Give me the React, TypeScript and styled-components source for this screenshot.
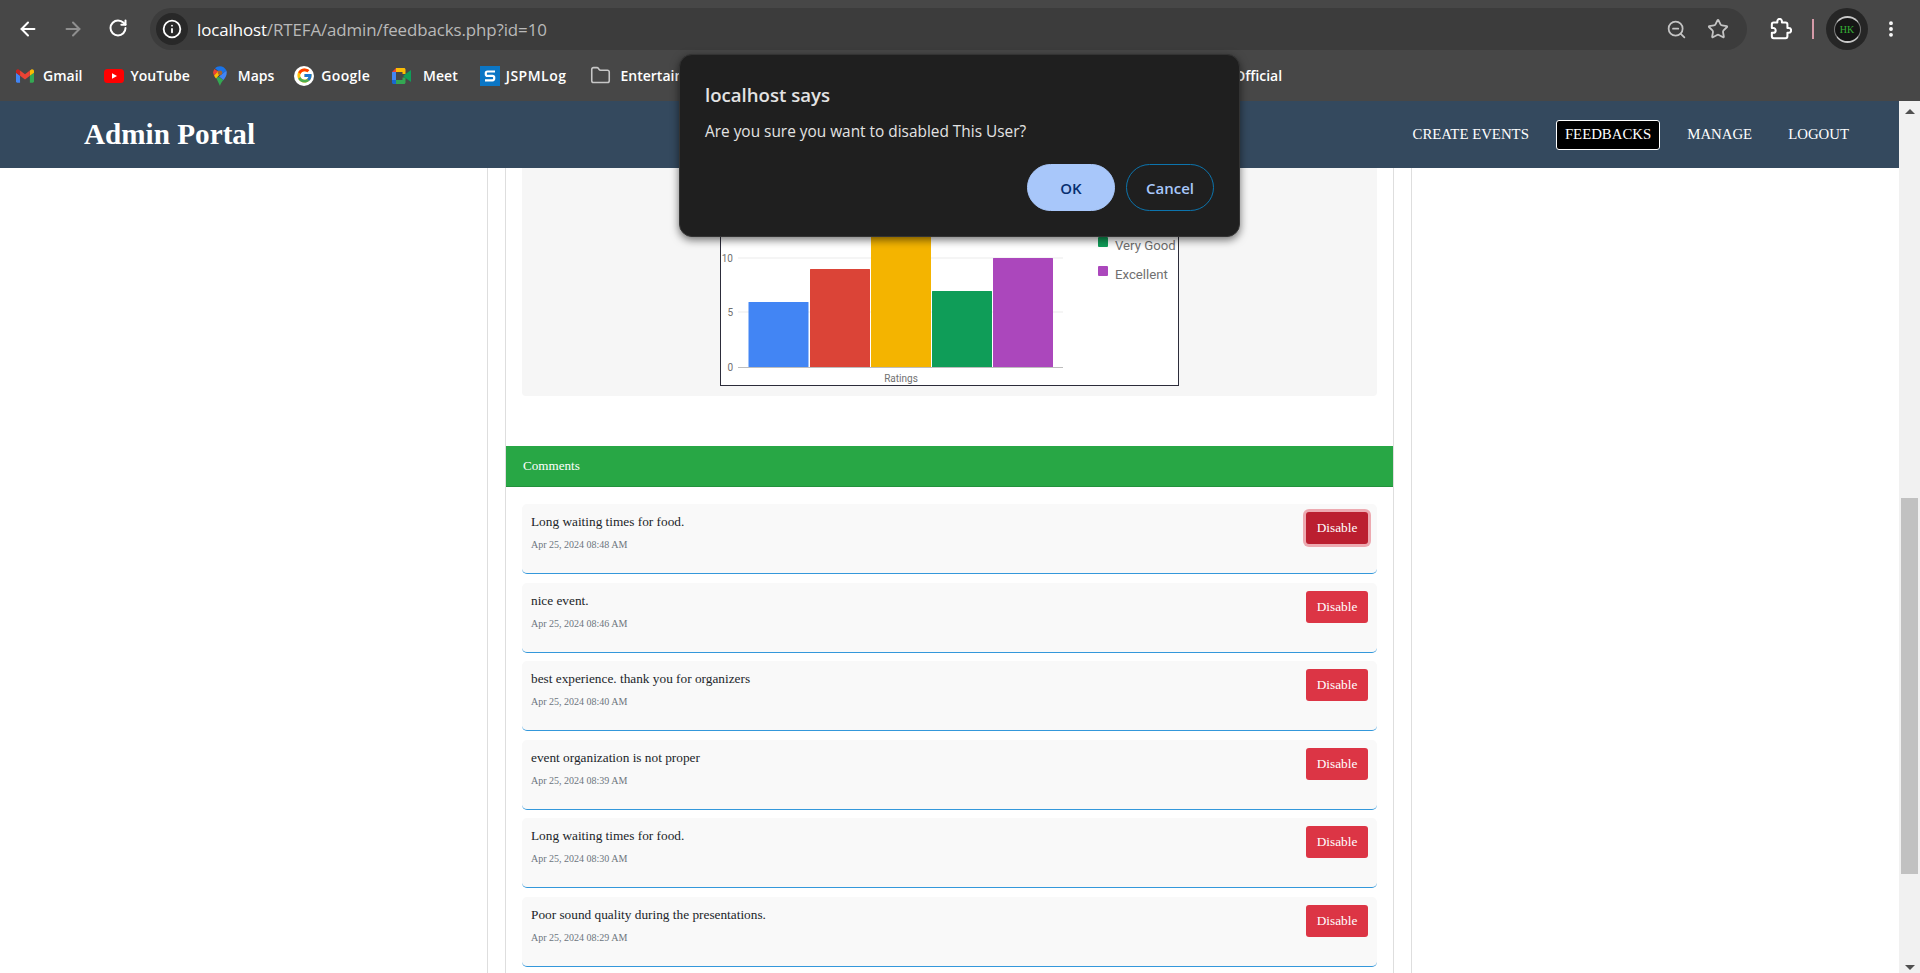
import { FC, ReactNode } from "react";
import styled, { createGlobalStyle } from "styled-components";
import { ArrowLeft, ArrowRight, EllipsisVertical, Folder, Info, RotateCw, Star, ZoomOut } from "lucide-react";
import { FcGoogle } from "react-icons/fc";

const GlobalStyle = createGlobalStyle`
  html, body {
    margin: 0;
    padding: 0;
    height: 100%;
    overflow: hidden;
    background: #fff;
  }
  * {
    box-sizing: border-box;
  }
`;

const Screen = styled.div`
  position: relative;
  width: 1920px;
  height: 973px;
  overflow: hidden;
  display: flex;
  flex-direction: column;
  font-family: "Liberation Serif", "Times New Roman", serif;
`;

/* browser chrome */
const Chrome = styled.header`
  height: 101px;
  flex: none;
  background: #474747;
  font-family: "Open Sans", "Noto Sans", sans-serif;
  color: #fff;
`;
const ToolRow = styled.div`
  height: 58px;
  padding: 8px 0 8px 0;
  display: flex;
  align-items: center;
`;
const NavIcon = styled.span<{ $dim?: boolean }>`
  width: 45px;
  flex: none;
  display: flex;
  justify-content: center;
  color: ${(props) => (props.$dim ? "#8f8f8f" : "#fff")};
`;
const NavIcons = styled.div`
  display: flex;
  padding-left: 5px;
  width: 150px;
  flex: none;
`;
const AddressBar = styled.div`
  width: 1597px;
  height: 42px;
  flex: none;
  border-radius: 21px;
  background: #3c3c3c;
  display: flex;
  align-items: center;
  padding: 0 6px;
`;
const SiteInfo = styled.span`
  width: 32px;
  height: 32px;
  border-radius: 50%;
  background: #282828;
  display: flex;
  align-items: center;
  justify-content: center;
  flex: none;
`;
const Url = styled.div`
  margin-left: 9px;
  font-size: 16.9px;
  letter-spacing: -0.1px;
  color: #b9b9b9;
  flex: 1;
  white-space: nowrap;
  strong {
    font-weight: 400;
    color: #fff;
  }
`;
const BarAction = styled.span<{ $gap: number }>`
  display: flex;
  margin-right: ${(props) => props.$gap}px;
  color: #c4c4c4;
`;
const ExtensionBtn = styled.span`
  margin-left: 23px;
  display: flex;
  color: #fff;
`;
const Divider = styled.span`
  width: 2px;
  height: 20px;
  margin-left: 20px;
  background: #d59aa8;
`;
const Avatar = styled.span`
  width: 42px;
  height: 42px;
  margin-left: 12px;
  border-radius: 50%;
  background: #262626;
  display: flex;
  align-items: center;
  justify-content: center;
  flex: none;
`;
const AvatarInner = styled.span`
  width: 27px;
  height: 27px;
  border-radius: 50%;
  background: #151515;
  border-style: solid;
  border-width: 2px 1px;
  border-color: #c9c9c9 #7a7a7a;
  color: #35b035;
  font: 10px "Liberation Serif", serif;
  display: flex;
  align-items: center;
  justify-content: center;
`;
const MenuBtn = styled.span`
  margin-left: 13px;
  display: flex;
  color: #fff;
`;

const BookmarkRow = styled.nav`
  height: 35px;
  padding-left: 16px;
  display: flex;
  align-items: center;
  font-size: 14px;
  font-weight: 600;
  white-space: nowrap;
`;
const Mark = styled.span<{ $gap: number; $left: number; $spread?: number }>`
  display: flex;
  align-items: center;
  gap: ${(props) => props.$gap}px;
  margin-left: ${(props) => props.$left}px;
  letter-spacing: ${(props) => props.$spread || 0}px;
  flex: none;
  svg {
    flex: none;
    display: block;
  }
`;
const GoogleDisc = styled.span`
  width: 20px;
  height: 20px;
  border-radius: 50%;
  background: #fff;
  display: flex;
  align-items: center;
  justify-content: center;
`;

/* page */
const Body = styled.div`
  flex: 1;
  min-height: 0;
  display: flex;
`;
const Viewport = styled.div`
  flex: 1;
  min-width: 0;
  display: flex;
  flex-direction: column;
  overflow: hidden;
`;
const TopNav = styled.div`
  height: 67px;
  flex: none;
  background: #34495e;
  color: #fff;
  display: flex;
  align-items: center;
  justify-content: space-between;
  padding: 0 41px 0 84px;
`;
const Brand = styled.h1`
  margin: 0;
  font-size: 29.2px;
  font-weight: 700;
  letter-spacing: 0;
`;
const NavLinks = styled.div`
  display: flex;
  align-items: center;
  gap: 18px;
`;
const NavLink = styled.a<{ $active?: boolean }>`
  font-size: 14.8px;
  height: 30px;
  display: flex;
  align-items: center;
  padding: 0 8px;
  border-radius: 3px;
  border: 1px solid ${(props) => (props.$active ? "#fff" : "transparent")};
  background: ${(props) => (props.$active ? "#000" : "transparent")};
  color: #fff;
`;
const Container = styled.main`
  width: 925px;
  margin: 0 auto;
  padding: 0 17px;
  border-left: 1px solid #dedede;
  border-right: 1px solid #dedede;
  flex: 1;
`;
const Card = styled.section`
  border-left: 1px solid #dedede;
  border-right: 1px solid #dedede;
  min-height: 100%;
`;
const ChartPanel = styled.div`
  margin: 0 16px 50px;
  height: 228px;
  padding-bottom: 10px;
  background: #f6f6f6;
  border-radius: 0 0 4px 4px;
  display: flex;
  justify-content: center;
`;
const ChartBox = styled.div`
  width: 459px;
  height: 218px;
  background: #fff;
  border: 1px solid #2c2c3a;
  svg {
    display: block;
  }
`;
const CommentsHead = styled.h2`
  margin: 0;
  height: 41px;
  padding: 0 17px;
  display: flex;
  align-items: center;
  background: #28a745;
  border-bottom: 1px solid #23913c;
  color: #fff;
  font-size: 13.1px;
  font-weight: 400;
`;
const CommentList = styled.div`
  padding: 17px 16px 0;
  display: flex;
  flex-direction: column;
  gap: 8.5px;
`;
const CommentRow = styled.article`
  height: 70px;
  flex: none;
  padding: 8px 9px 0;
  background: #f9f9f9;
  border-bottom: 1px solid #3498db;
  border-radius: 5px;
  display: flex;
  justify-content: space-between;
  align-items: flex-start;
`;
const CommentText = styled.p`
  margin: 0;
  padding-top: 1px;
  font-size: 13.3px;
  line-height: 18px;
  color: #212529;
`;
const CommentDate = styled.small`
  display: block;
  margin-top: 6px;
  font-size: 10px;
  line-height: 15px;
  color: #6c757d;
`;
const DisableBtn = styled.button<{ $focus?: boolean }>`
  width: 62px;
  height: 32px;
  padding: 0;
  border: 0;
  border-radius: 3px;
  background: ${(props) => (props.$focus ? "#bb1f30" : "#dc3545")};
  box-shadow: ${(props) => (props.$focus ? "0 0 0 3px rgba(220, 53, 69, 0.4)" : "none")};
  color: #fff;
  font-family: inherit;
  font-size: 13.3px;
`;

/* scrollbar */
const Scrollbar = styled.aside`
  width: 21px;
  flex: none;
  background: #f1f1f1;
  display: flex;
  flex-direction: column;
  align-items: center;
`;
const ArrowUp = styled.span`
  margin-top: 8px;
  border-left: 5px solid transparent;
  border-right: 5px solid transparent;
  border-bottom: 5px solid #505050;
`;
const ArrowDown = styled.span`
  margin-top: auto;
  margin-bottom: 3px;
  border-left: 5px solid transparent;
  border-right: 5px solid transparent;
  border-top: 5px solid #505050;
`;
const Thumb = styled.span`
  width: 17px;
  height: 376px;
  margin-top: 384px;
  background: #c1c1c1;
`;

/* alert dialog */
const Dialog = styled.div`
  position: absolute;
  left: 679px;
  top: 54px;
  width: 561px;
  height: 183px;
  padding: 26px 25px 0;
  background: #1f1f1f;
  border-radius: 13px;
  border: 1px solid #333;
  box-shadow: 0 3px 8px rgba(0, 0, 0, 0.55);
  font-family: "Open Sans", "Noto Sans", sans-serif;
  color: #e3e3e3;
`;
const DialogTitle = styled.h3`
  margin: 0;
  font-size: 18.6px;
  line-height: 28px;
  font-weight: 600;
`;
const DialogText = styled.p`
  margin: 13px 0 0;
  font-size: 15.4px;
  line-height: 20px;
`;
const DialogActions = styled.div`
  margin-top: 22px;
  display: flex;
  justify-content: flex-end;
  gap: 11px;
`;
const DialogBtn = styled.button<{ $primary?: boolean }>`
  width: 88px;
  height: 47px;
  border-radius: 24px;
  font-family: inherit;
  font-size: 15px;
  font-weight: 600;
  padding: 0;
  border: 1px solid ${(props) => (props.$primary ? "#a8c7fa" : "#0c74ad")};
  background: ${(props) => (props.$primary ? "#a8c7fa" : "transparent")};
  color: ${(props) => (props.$primary ? "#062e6f" : "#a8c7fa")};
`;

const ExtensionIcon = () => (
  <svg width="22" height="22" viewBox="0 0 24 24" fill="none" stroke="currentColor" strokeWidth="2.2" strokeLinejoin="round">
    <path d="M20.5 11H19V7c0-1.100-.9-2-2-2h-4V3.500C13 2.120 11.880 1 10.500 1S8 2.120 8 3.500V5H4c-1.100 0-2 .9-2 2v3.800h1.500c1.490 0 2.700 1.210 2.700 2.700s-1.210 2.700-2.700 2.700H2V20c0 1.100.9 2 2 2h13c1.100 0 2-.9 2-2v-4h1.500c1.380 0 2.500-1.120 2.500-2.500S21.880 11 20.500 11z" />
  </svg>
);
const GmailIcon = () => (
  <svg width="18" height="14" viewBox="0 0 24 18">
    <path fill="#4285f4" d="M1.600 18h3.800V8.700L0 4.600v11.800C0 17.300.7 18 1.600 18z" />
    <path fill="#34a853" d="M18.500 18h3.800c.9 0 1.700-.7 1.700-1.600V4.600l-5.500 4.100z" />
    <path fill="#fbbc04" d="M18.500 1.600v7.100L24 4.600V2.500c0-2-2.300-3.200-3.900-2z" />
    <path fill="#ea4335" d="M5.400 8.700V1.600L12 6.500l6.500-4.900v7.100L12 13.600z" />
    <path fill="#c5221f" d="M0 2.500v2.100l5.400 4.100V1.600L3.900.5C2.300-.7 0 .5 0 2.500z" />
  </svg>
);
const YoutubeIcon = () => (
  <svg width="20" height="14" viewBox="0 0 20 14">
    <rect width="20" height="14" rx="3.500" fill="#f00" />
    <path fill="#fff" d="M8 4.200 13 7 8 9.800z" />
  </svg>
);
const MapsIcon = () => (
  <svg width="14" height="20" viewBox="0 0 14 20">
    <path fill="#34a853" d="M3 11.500 7 20c.5-2.500 2-4.200 3.500-6L6 11z" />
    <path fill="#fbbc04" d="M1 9.500c.4 1 1.200 2 2 3L8 7 5 4.500z" />
    <path fill="#4285f4" d="m9 8 4.400-3.400C14.500 8 12.800 11 10.500 14L6 10.500z" />
    <path fill="#ea4335" d="M1.500 3 5 5.500 1 9.500C-.2 7-.2 5 1.500 3z" />
    <path fill="#1a73e8" d="M2 2.400C4.500-.7 11-1 13.400 4.600L9 8 5 4.500z" />
    <circle cx="7" cy="6.800" r="2.300" fill="#a9662e" />
  </svg>
);
const MeetIcon = () => (
  <svg width="19" height="16" viewBox="0 0 19 16">
    <path fill="#ea4335" d="M4 0 0 4h4z" />
    <path fill="#4285f4" d="M0 4h4v8H0z" />
    <path fill="#1967d2" d="M0 12h4v4H1.500C.7 16 0 15.300 0 14.500z" />
    <path fill="#fbbc04" d="M4 0h8c.8 0 1.500.7 1.500 1.500V6l-3 0V4H4z" />
    <path fill="#34a853" d="M4 12h6.500V9.500l3 0v5c0 .8-.7 1.500-1.500 1.500H4z" />
    <path fill="#0f9d58" d="m11 8 2.500-2 5.500-4v12l-5.500-4z" />
  </svg>
);
const JspIcon = () => (
  <svg width="20" height="20" viewBox="0 0 20 20">
    <rect width="20" height="20" fill="#0b76c5" />
    <path fill="none" stroke="#fff" strokeWidth="2.200" d="M15 5.500H7.500c-1 0-1.700.6-1.700 1.700v1c0 1 .7 1.700 1.700 1.700h5c1 0 1.700.7 1.700 1.700v1c0 1.100-.7 1.700-1.700 1.700H5" />
  </svg>
);

const Bookmark: FC<{ icon: ReactNode; label: string; gap: number; left: number; spread?: number }> = ({ icon, label, gap, left, spread }) => (
  <Mark $gap={gap} $left={left} $spread={spread}>
    {icon}
    {label}
  </Mark>
);

const Chart = () => {
  const bars = [
    { x: 748.5, top: 302, color: "#4285f4" },
    { x: 810, top: 269, color: "#db4437" },
    { x: 871, top: 214, color: "#f4b400" },
    { x: 932, top: 291, color: "#0f9d58" },
    { x: 993, top: 258, color: "#ab47bc" },
  ];
  const labelStyle = { fontFamily: "Roboto, Arial, sans-serif", fontSize: 10, fill: "#707070" };
  return (
    <svg width="457" height="216" viewBox="721 169 457 216">
      <line x1="738" x2="1063" y1="258" y2="258" stroke="#ebebeb" />
      <line x1="738" x2="1063" y1="312" y2="312" stroke="#ebebeb" />
      {bars.map((bar) => (
        <rect key={bar.x} x={bar.x} y={bar.top} width="60" height={367 - bar.top} fill={bar.color} rx="0.5" />
      ))}
      <line x1="738" x2="1063" y1="367.500" y2="367.500" stroke="#bdbdbd" />
      <text x="733" y="262" textAnchor="end" style={labelStyle}>10</text>
      <text x="733" y="316" textAnchor="end" style={labelStyle}>5</text>
      <text x="733" y="371" textAnchor="end" style={labelStyle}>0</text>
      <text x="901" y="382" textAnchor="middle" style={labelStyle}>Ratings</text>
      <rect x="1098" y="237" width="10" height="10" rx="1" fill="#0f9d58" />
      <text x="1115" y="250" style={{ ...labelStyle, fontSize: 13.2 }}>Very Good</text>
      <rect x="1098" y="266" width="10" height="10" rx="1" fill="#ab47bc" />
      <text x="1115" y="279" style={{ ...labelStyle, fontSize: 13.2 }}>Excellent</text>
    </svg>
  );
};

const comments = [
  { text: "Long waiting times for food.", date: "Apr 25, 2024 08:48 AM" },
  { text: "nice event.", date: "Apr 25, 2024 08:46 AM" },
  { text: "best experience. thank you for organizers", date: "Apr 25, 2024 08:40 AM" },
  { text: "event organization is not proper", date: "Apr 25, 2024 08:39 AM" },
  { text: "Long waiting times for food.", date: "Apr 25, 2024 08:30 AM" },
  { text: "Poor sound quality during the presentations.", date: "Apr 25, 2024 08:29 AM" },
];

const App = () => {
  return (
    <Screen>
      <GlobalStyle />
      <Chrome>
        <ToolRow>
          <NavIcons>
            <NavIcon><ArrowLeft size={22} strokeWidth={2.2} /></NavIcon>
            <NavIcon $dim><ArrowRight size={22} strokeWidth={2.2} /></NavIcon>
            <NavIcon><RotateCw size={20} strokeWidth={2.4} /></NavIcon>
          </NavIcons>
          <AddressBar>
            <SiteInfo><Info size={20} strokeWidth={2.2} color="#fff" /></SiteInfo>
            <Url><strong>localhost</strong>/RTEFA/admin/feedbacks.php?id=10</Url>
            <BarAction $gap={20}><ZoomOut size={21} strokeWidth={2} /></BarAction>
            <BarAction $gap={12}><Star size={22} strokeWidth={2} /></BarAction>
          </AddressBar>
          <ExtensionBtn><ExtensionIcon /></ExtensionBtn>
          <Divider />
          <Avatar><AvatarInner>HK</AvatarInner></Avatar>
          <MenuBtn><EllipsisVertical size={20} strokeWidth={2.6} /></MenuBtn>
        </ToolRow>
        <BookmarkRow>
          <Bookmark icon={<GmailIcon />} label="Gmail" gap={9} left={0} />
          <Bookmark icon={<YoutubeIcon />} label="YouTube" gap={6} left={22} />
          <Bookmark icon={<MapsIcon />} label="Maps" gap={11} left={23} />
          <Bookmark icon={<GoogleDisc><FcGoogle size={17} /></GoogleDisc>} label="Google" gap={7} left={20} spread={0.3} />
          <Bookmark icon={<MeetIcon />} label="Meet" gap={12} left={22} />
          <Bookmark icon={<JspIcon />} label="JSPMLog" gap={6} left={22} spread={0.5} />
          <Bookmark icon={<Folder size={21} strokeWidth={1.8} color="#c7c7c7" />} label="Entertainment" gap={10} left={23} />
          <Bookmark icon={null} label="Official" gap={0} left={515} />
        </BookmarkRow>
      </Chrome>
      <Body>
        <Viewport>
          <TopNav>
            <Brand>Admin Portal</Brand>
            <NavLinks>
              <NavLink>CREATE EVENTS</NavLink>
              <NavLink $active>FEEDBACKS</NavLink>
              <NavLink>MANAGE</NavLink>
              <NavLink>LOGOUT</NavLink>
            </NavLinks>
          </TopNav>
          <Container>
            <Card>
              <ChartPanel>
                <ChartBox>
                  <Chart />
                </ChartBox>
              </ChartPanel>
              <CommentsHead>Comments</CommentsHead>
              <CommentList>
                {comments.map((comment, index) => (
                  <CommentRow key={comment.date}>
                    <CommentText>
                      {comment.text}
                      <CommentDate>{comment.date}</CommentDate>
                    </CommentText>
                    <DisableBtn $focus={index === 0}>Disable</DisableBtn>
                  </CommentRow>
                ))}
              </CommentList>
            </Card>
          </Container>
        </Viewport>
        <Scrollbar>
          <ArrowUp />
          <Thumb />
          <ArrowDown />
        </Scrollbar>
      </Body>
      <Dialog role="alertdialog">
        <DialogTitle>localhost says</DialogTitle>
        <DialogText>Are you sure you want to disabled This User?</DialogText>
        <DialogActions>
          <DialogBtn $primary>OK</DialogBtn>
          <DialogBtn>Cancel</DialogBtn>
        </DialogActions>
      </Dialog>
    </Screen>
  );
};

export default App;
